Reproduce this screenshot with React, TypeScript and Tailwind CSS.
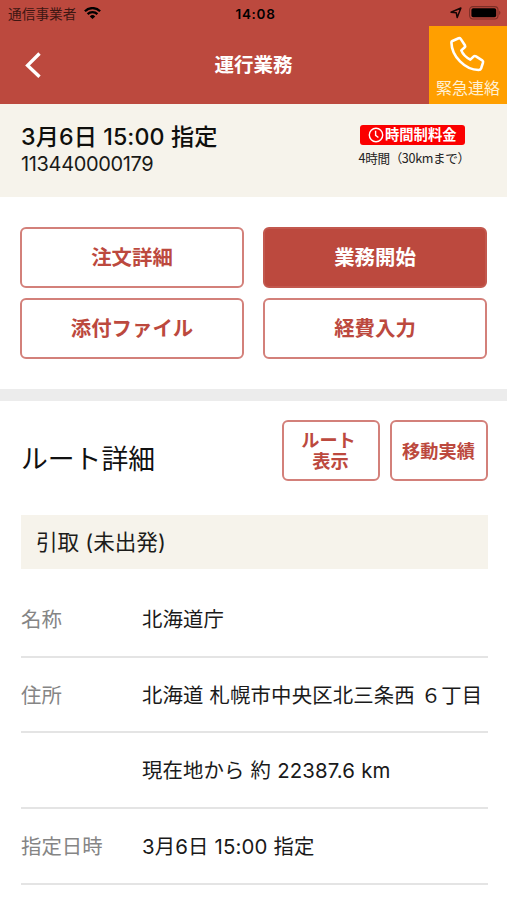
import type { ReactNode } from 'react';
import { clsx } from 'clsx';

const rows = [
  { label: '名称', value: '北海道庁' },
  { label: '住所', value: '北海道 札幌市中央区北三条西 ６丁目' },
  { label: '', value: '現在地から 約 22387.6 km' },
  { label: '指定日時', value: '3月6日 15:00 指定' },
];

const StatusBar = () => (
  <div className="flex h-[25.5px] items-center text-[#1d0d0b]">
    <div className="flex flex-1 items-center pl-2">
      <span className="pt-[3px] text-[13.7px] leading-[25px] text-[#3d1612]">通信事業者</span>
      <svg className="ml-2 mt-[1px]" width="17" height="12" viewBox="0 0 17 12" fill="none" stroke="#000" strokeWidth="2.3">
        <path d="M0.9 4.2a10.8 10.8 0 0 1 15.2 0" />
        <path d="M3.6 7.1a6.9 6.9 0 0 1 9.8 0" />
        <path d="M8.5 12 5.8 9.4a3.9 3.9 0 0 1 5.4 0Z" fill="#000" stroke="none" />
      </svg>
    </div>
    <span className="pl-[2px] pt-[2px] text-[13.5px] font-semibold tracking-[0.7px] text-black">14:08</span>
    <div className="flex flex-1 items-center justify-end pr-[6px] pt-[1px]">
      <svg width="12" height="12" viewBox="0 0 12 12" fill="none" stroke="#160605" strokeWidth="1.5" strokeLinejoin="round">
        <path d="M10.9 1 7.2 10.6 6.3 5.8 1 5.2Z" />
      </svg>
      <svg className="ml-[7px]" width="32" height="14" viewBox="0 0 32 14">
        <rect x="0.6" y="0.6" width="28.4" height="12.4" rx="3.4" fill="none" stroke="#7d2e27" strokeWidth="1.1" />
        <rect x="2.4" y="2.3" width="24.8" height="9" rx="1.8" fill="#000" />
        <path d="M30.2 4.8v4.2c1.6-.7 1.6-3.5 0-4.2Z" fill="#7d2e27" />
      </svg>
    </div>
  </div>
);

const Header = () => (
  <header className="h-[103.5px] bg-[#bc493e]">
    <StatusBar />
    <div className="flex h-[78px] items-center">
      <button className="flex w-[78px] items-center pl-6">
        <svg width="18" height="28" viewBox="0 0 18 28" fill="none" stroke="#fff" strokeWidth="3.4">
          <path d="M15.5 2.5 3.6 14.4l11.9 11.4" />
        </svg>
      </button>
      <h1 className="flex-1 pt-[3px] text-center text-[19.5px] font-bold text-white">運行業務</h1>
      <button className="flex h-[78px] w-[78px] flex-col items-center bg-[#ff9f00] pt-[10px]">
        <svg width="36" height="36" viewBox="0 0 36 36" fill="none" stroke="#fff" strokeWidth="2.6" strokeLinejoin="round">
          <path d="M2.4 5 8.6 2.3Q9.9 1.8 10.7 2.9L14.9 9.2Q15.6 10.5 14.5 11.5L11.3 14.4C12.6 17.8 16.4 21.6 20.3 23.6L23.5 20.6Q24.6 19.6 26 20.4L32.2 24.3Q33.5 25.2 33 26.6L31.2 32.2Q30.5 34 28.6 34C15 34 1.7 20.4 1.4 6.5Q1.4 5.5 2.4 5Z" />
        </svg>
        <span className="mt-[5px] text-[16px] leading-[22px] text-[#fff0d2]">緊急連絡</span>
      </button>
    </div>
  </header>
);

const OrderSummary = () => (
  <section className="flex h-[93px] justify-between bg-[#f6f3eb] pl-[21px] pr-[42px]">
    <div className="pt-[19px]">
      <p className="text-[23.2px] font-medium leading-[28px] tracking-[0.1px] text-[#0f0f0d]">3月6日 15:00 指定</p>
      <p className="text-[20px] leading-[27px] tracking-[-0.35px] text-[#1a1a18]">113440000179</p>
    </div>
    <div className="w-[105.5px] pt-[21.5px]">
      <div className="flex h-[20px] items-center justify-center gap-[1px] rounded-[3px] bg-[#fb0000]">
        <svg width="16" height="16" viewBox="0 0 16 16" fill="none" stroke="#fff" strokeWidth="1.4">
          <circle cx="8" cy="8" r="6.7" />
          <path d="M7.6 3.8v4.6l2.8 2.1" />
        </svg>
        <span className="text-[14.3px] font-bold leading-5 text-white">時間制料金</span>
      </div>
      <p className="-ml-px mt-[3px] whitespace-nowrap font-['Noto_Sans_CJK_JP',sans-serif] text-[12.6px] leading-5 tracking-[-0.35px] text-[#222]">4時間（30kmまで）</p>
    </div>
  </section>
);

type ActionButtonProps = { children: ReactNode; filled?: boolean; small?: boolean };

const ActionButton = ({ children, filled, small }: ActionButtonProps) => (
  <button
    className={clsx(
      'flex h-[61px] items-center justify-center rounded-[6px] border-2 pt-[2px] font-bold',
      small ? 'w-[98px] text-[18.2px] leading-[21px]' : 'text-[20.4px]',
      filled ? 'border-[#c2584e] bg-[#bc493e] text-white' : 'border-[#d3807a] bg-white text-[#bc493e]',
    )}
  >
    {children}
  </button>
);

const DetailRow = ({ label, value }: { label: string; value: string }) => (
  <div className="flex h-[75.7px] items-center border-b-2 border-[#e4e4e4] pt-[3px] text-[20.4px]">
    <span className="w-[121px] shrink-0 text-[#858585]">{label}</span>
    <span className="whitespace-nowrap tracking-[0.12px] [word-spacing:0.2px] text-[#1a1a1a]">{value}</span>
  </div>
);

export default function App() {
  return (
    <div className="h-[900px] w-[507px] overflow-hidden bg-white font-['Inter','Noto_Sans_CJK_JP',sans-serif]">
      <Header />
      <OrderSummary />

      <section className="grid h-[192px] grid-cols-2 content-start gap-x-[19px] gap-y-[10px] px-[20px] pt-[30.5px]">
        <ActionButton>注文詳細</ActionButton>
        <ActionButton filled>業務開始</ActionButton>
        <ActionButton>添付ファイル</ActionButton>
        <ActionButton>経費入力</ActionButton>
      </section>

      <div className="h-[12px] bg-[#ececec]" />

      <section className="pl-[21px] pr-[19.5px] pt-[19px]">
        <div className="flex h-[61.5px] items-center justify-between">
          <h2 className="pt-[18px] text-[26.8px] leading-[40px] text-[#111]">ルート詳細</h2>
          <div className="flex gap-[10px]">
            <ActionButton small>
              <span className="-ml-1 text-left">
                ルート
                <br />
                <span className="pl-[11px]">表示</span>
              </span>
            </ActionButton>
            <ActionButton small>移動実績</ActionButton>
          </div>
        </div>

        <h3 className="mt-[34px] flex h-[54px] items-center bg-[#f6f3eb] pl-[15px] text-[21.6px] text-[#1c1c1a]">
          引取 (未出発)
        </h3>

        <div className="mt-[13px]">
          {rows.map((row) => (
            <DetailRow key={row.label} {...row} />
          ))}
        </div>
      </section>
    </div>
  );
}
